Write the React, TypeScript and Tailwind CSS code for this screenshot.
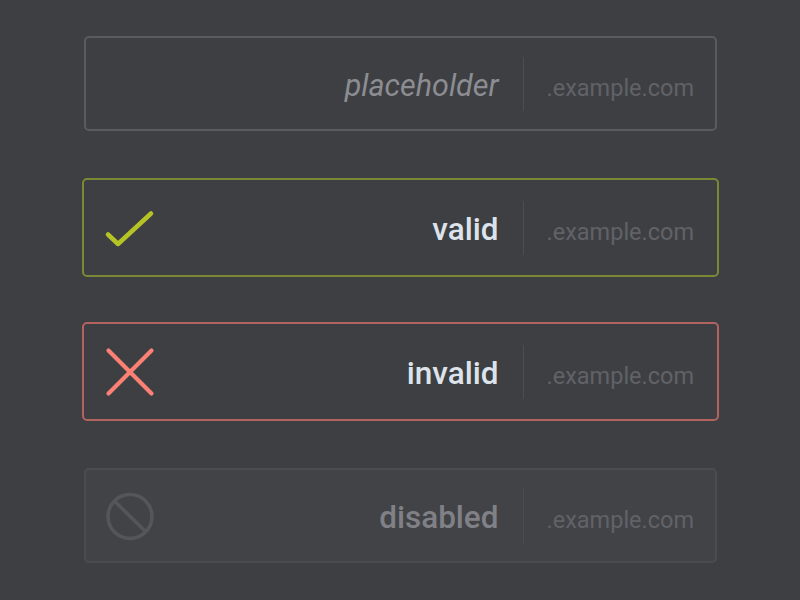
import type { ReactNode } from "react";

type Variant = "placeholder" | "valid" | "invalid" | "disabled";

const boxStyles: Record<Variant, string> = {
  placeholder: "w-[633px] h-[95px] border-[#5a5b60] bg-[#3e3f43]",
  valid: "w-[637px] h-[99px] px-[2px] border-[#7d8834] bg-[#3e3f43]",
  invalid: "w-[637px] h-[99px] px-[2px] border-[#b3635f] bg-[#3e3f43]",
  disabled: "w-[633px] h-[95px] border-[#4b4c51] bg-[#424347]",
};

const labelStyles: Record<Variant, string> = {
  placeholder: "italic font-normal text-[30.5px] text-[#8c8d92]",
  valid: "font-medium text-[31.5px] text-[#dce3eb]",
  invalid: "font-medium text-[31.5px] text-[#dce3eb]",
  disabled: "font-medium text-[31.5px] text-[#808186]",
};

function CheckIcon() {
  return (
    <svg width="52" height="52" viewBox="0 0 52 52" fill="none">
      <path
        d="M4 32.5 L14 42 L47 11.5"
        stroke="#b5c424"
        strokeWidth="4.5"
        strokeLinecap="round"
        strokeLinejoin="round"
      />
    </svg>
  );
}

function CrossIcon() {
  return (
    <svg width="52" height="52" viewBox="0 0 52 52" fill="none">
      <path
        d="M4.5 4.5 L47.5 47.5 M47.5 4.5 L4.5 47.5"
        stroke="#fc8073"
        strokeWidth="4.2"
        strokeLinecap="round"
      />
    </svg>
  );
}

function BlockedIcon() {
  return (
    <svg width="52" height="52" viewBox="0 0 52 52" fill="none">
      <circle cx="26" cy="26.5" r="22" stroke="#55565b" strokeWidth="3.5" />
      <path d="M11 11.5 L41 41" stroke="#55565b" strokeWidth="3.5" />
    </svg>
  );
}

const icons: Record<Variant, ReactNode> = {
  placeholder: null,
  valid: <CheckIcon />,
  invalid: <CrossIcon />,
  disabled: <BlockedIcon />,
};

function Field({ variant, label }: { variant: Variant; label: string }) {
  return (
    <div className="h-[99px] flex items-center justify-center">
      <div
        className={`flex items-center rounded-[5px] border-2 ${boxStyles[variant]}`}
      >
        {/* icon */}
        <div className="ml-[18px] w-[52px] h-[52px] shrink-0">
          {icons[variant]}
        </div>

        {/* value */}
        <div
          className={`flex-1 text-right pr-[24px] pt-[5px] leading-none ${labelStyles[variant]}`}
        >
          {label}
        </div>

        <div className="w-px h-[54px] bg-[#4c4d52] shrink-0" />

        {/* suffix */}
        <div className="w-[191px] pl-[23px] pt-[11px] text-[23.5px] leading-none text-[#616267] shrink-0">
          .example.com
        </div>
      </div>
    </div>
  );
}

export default function App() {
  return (
    <div
      className="w-[800px] h-[600px] bg-[#3e3f43] pt-[34px] flex flex-col gap-[45px]"
      style={{ fontFamily: "Roboto, 'Noto Sans', sans-serif" }}
    >
      <Field variant="placeholder" label="placeholder" />
      <Field variant="valid" label="valid" />
      <Field variant="invalid" label="invalid" />
      <Field variant="disabled" label="disabled" />
    </div>
  );
}
